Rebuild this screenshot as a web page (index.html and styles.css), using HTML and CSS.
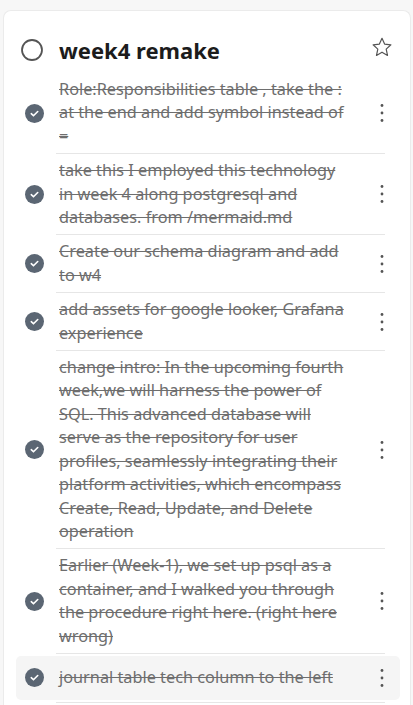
FILE: index.html
```html
<!DOCTYPE html>
<html lang="en">
<head>
<meta charset="utf-8">
<title>week4 remake</title>
<link rel="stylesheet" href="styles.css">
</head>
<body>
<div class="card">
  <div class="header">
    <svg class="ring" width="22" height="22" viewBox="0 0 22 22"><circle cx="11" cy="11" r="10" fill="none" stroke="#555" stroke-width="1.8"/></svg>
    <h1 class="title">week4 remake</h1>
    <svg class="star" width="20" height="20" viewBox="0 0 20 20"><polygon points="10,1.3 12.6,7.1 18.9,7.8 14.2,12.1 15.5,18.4 10,15.2 4.5,18.4 5.8,12.1 1.1,7.8 7.4,7.1" fill="none" stroke="#555" stroke-width="1.2" stroke-linejoin="round"/></svg>
  </div>
  <ul class="tasks">
    <li class="task"><div class="row"><svg class="check" width="19" height="19" viewBox="0 0 20 20"><circle cx="10" cy="10" r="10" fill="#5b6673"/><path d="M6.6 10.2 L8.9 12.4 L13.4 7.9" fill="none" stroke="#fff" stroke-width="1.7" stroke-linecap="round" stroke-linejoin="round"/></svg><span class="text">Role:Responsibilities table , take the : at the end and add symbol instead of =</span><svg class="more" width="4" height="20" viewBox="0 0 4 20"><circle cx="2" cy="2.5" r="1.4"/><circle cx="2" cy="10" r="1.4"/><circle cx="2" cy="17.5" r="1.4"/></svg></div></li>
    <li class="task"><div class="row"><svg class="check" width="19" height="19" viewBox="0 0 20 20"><circle cx="10" cy="10" r="10" fill="#5b6673"/><path d="M6.6 10.2 L8.9 12.4 L13.4 7.9" fill="none" stroke="#fff" stroke-width="1.7" stroke-linecap="round" stroke-linejoin="round"/></svg><span class="text">take this I employed this technology in week 4 along postgresql and databases. from /mermaid.md</span><svg class="more" width="4" height="20" viewBox="0 0 4 20"><circle cx="2" cy="2.5" r="1.4"/><circle cx="2" cy="10" r="1.4"/><circle cx="2" cy="17.5" r="1.4"/></svg></div></li>
    <li class="task"><div class="row"><svg class="check" width="19" height="19" viewBox="0 0 20 20"><circle cx="10" cy="10" r="10" fill="#5b6673"/><path d="M6.6 10.2 L8.9 12.4 L13.4 7.9" fill="none" stroke="#fff" stroke-width="1.7" stroke-linecap="round" stroke-linejoin="round"/></svg><span class="text">Create our schema diagram and add to w4</span><svg class="more" width="4" height="20" viewBox="0 0 4 20"><circle cx="2" cy="2.5" r="1.4"/><circle cx="2" cy="10" r="1.4"/><circle cx="2" cy="17.5" r="1.4"/></svg></div></li>
    <li class="task"><div class="row"><svg class="check" width="19" height="19" viewBox="0 0 20 20"><circle cx="10" cy="10" r="10" fill="#5b6673"/><path d="M6.6 10.2 L8.9 12.4 L13.4 7.9" fill="none" stroke="#fff" stroke-width="1.7" stroke-linecap="round" stroke-linejoin="round"/></svg><span class="text">add assets for google looker, Grafana experience</span><svg class="more" width="4" height="20" viewBox="0 0 4 20"><circle cx="2" cy="2.5" r="1.4"/><circle cx="2" cy="10" r="1.4"/><circle cx="2" cy="17.5" r="1.4"/></svg></div></li>
    <li class="task"><div class="row"><svg class="check" width="19" height="19" viewBox="0 0 20 20"><circle cx="10" cy="10" r="10" fill="#5b6673"/><path d="M6.6 10.2 L8.9 12.4 L13.4 7.9" fill="none" stroke="#fff" stroke-width="1.7" stroke-linecap="round" stroke-linejoin="round"/></svg><span class="text">change intro: In the upcoming fourth week,we will harness the power of SQL. This advanced database will serve as the repository for user profiles, seamlessly integrating their platform activities, which encompass Create, Read, Update, and Delete operation</span><svg class="more" width="4" height="20" viewBox="0 0 4 20"><circle cx="2" cy="2.5" r="1.4"/><circle cx="2" cy="10" r="1.4"/><circle cx="2" cy="17.5" r="1.4"/></svg></div></li>
    <li class="task"><div class="row"><svg class="check" width="19" height="19" viewBox="0 0 20 20"><circle cx="10" cy="10" r="10" fill="#5b6673"/><path d="M6.6 10.2 L8.9 12.4 L13.4 7.9" fill="none" stroke="#fff" stroke-width="1.7" stroke-linecap="round" stroke-linejoin="round"/></svg><span class="text">Earlier (Week-1), we set up psql as a container, and I walked you through the procedure right here. (right here wrong)</span><svg class="more" width="4" height="20" viewBox="0 0 4 20"><circle cx="2" cy="2.5" r="1.4"/><circle cx="2" cy="10" r="1.4"/><circle cx="2" cy="17.5" r="1.4"/></svg></div></li>
    <li class="task"><div class="row active"><svg class="check" width="19" height="19" viewBox="0 0 20 20"><circle cx="10" cy="10" r="10" fill="#5b6673"/><path d="M6.6 10.2 L8.9 12.4 L13.4 7.9" fill="none" stroke="#fff" stroke-width="1.7" stroke-linecap="round" stroke-linejoin="round"/></svg><span class="text">journal table tech column to the left</span><svg class="more" width="4" height="20" viewBox="0 0 4 20"><circle cx="2" cy="2.5" r="1.4"/><circle cx="2" cy="10" r="1.4"/><circle cx="2" cy="17.5" r="1.4"/></svg></div></li>
  </ul>
</div>
</body>
</html>
```
FILE: styles.css
```css
html, body {
  margin: 0;
  background: #f7f7f7;
}
body {
  padding: 10px 2px 0 3px;
  font-family: "Noto Sans", "Open Sans", sans-serif;
  overflow: hidden;
  height: 705px;
  box-sizing: border-box;
}
.card {
  background: #fff;
  border: 1px solid #ebebeb;
  border-bottom: none;
  border-radius: 8px 8px 0 0;
  height: 100%;
  overflow: hidden;
  box-sizing: border-box;
}
.header {
  display: flex;
  align-items: center;
  height: 46px;
  margin-top: 16px;
  padding: 0 18px 0 17px;
}
.ring {
  flex: none;
  display: block;
}
.title {
  flex: 1;
  margin: 0 0 0 16px;
  font-size: 22px;
  font-weight: 700;
  line-height: 30px;
  color: #1c1c1c;
}
.star {
  flex: none;
  display: block;
  margin-top: -6px;
}
.tasks {
  list-style: none;
  margin: 0;
  padding: 0 10px 0 12px;
}
.task::after {
  content: "";
  display: block;
  height: 1px;
  background: #e6e6e6;
  margin: 0 15px 0 40px;
}
.row {
  display: flex;
  align-items: center;
  min-height: 44px;
  padding: 3px 4px 3px 0;
  margin: 2px 0;
  border-radius: 5px;
  box-sizing: border-box;
}
.row.active {
  background: #f5f5f5;
}
.check {
  flex: none;
  display: block;
  margin-left: 9px;
}
.text {
  flex: 1;
  margin-left: 15px;
  font-size: 16.3px;
  line-height: 23.4px;
  color: #6e6e6e;
  text-decoration: line-through;
  text-decoration-thickness: 1px;
}
.more {
  flex: none;
  display: block;
  fill: #555;
  margin: 0 12px 0 30px;
}
```
